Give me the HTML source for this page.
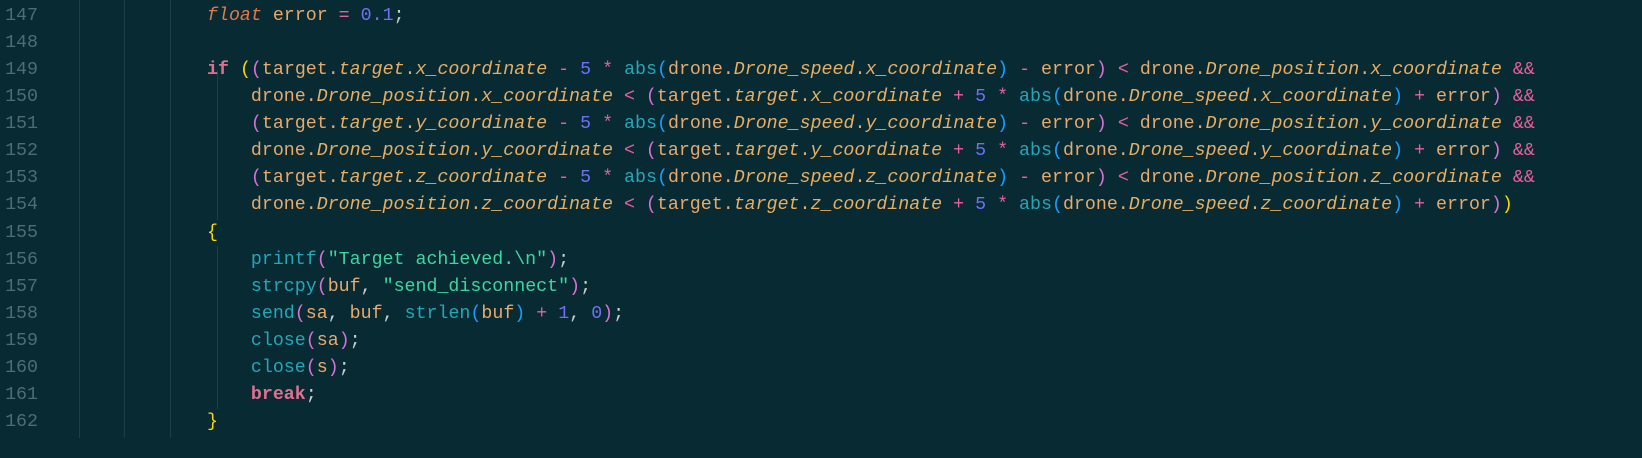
<!DOCTYPE html>
<html><head><meta charset="utf-8"><style>
body{margin:0;width:1642px;height:458px;background:#082a33;overflow:hidden;font-family:"Liberation Mono",monospace;font-size:18.3px;}
.g{position:absolute;top:0;width:1px;background:#1d4048;}
.ln{position:absolute;left:0;width:38px;text-align:right;color:#4d6d73;}
.c{position:absolute;left:207px;color:#e8a96c;}
.row{height:27.07px;line-height:27.07px;white-space:pre;}
i{font-style:italic;color:#e8ae62}
.k{color:#e0708f;font-weight:bold}
.t{color:#e07a4c;font-style:italic}
.o{color:#e8609a}
.n{color:#7070f0}
.f{color:#22a7b8}
.s{color:#3dd6a0}
.y{color:#ffd700}.p{color:#da70d6}.b{color:#179fff}
.w{color:#c8d0d0}
</style></head><body>
<div class="g" style="left:79px;height:438px"></div>
<div class="g" style="left:124px;height:438px"></div>
<div class="g" style="left:170px;height:438px"></div>
<div class="g" style="left:217px;top:70px;height:150px"></div>
<div class="g" style="left:217px;top:246px;height:163px"></div>
<div class="ln" style="top:3px">
<div class="row">147</div><div class="row">148</div><div class="row">149</div><div class="row">150</div><div class="row">151</div><div class="row">152</div><div class="row">153</div><div class="row">154</div><div class="row">155</div><div class="row">156</div><div class="row">157</div><div class="row">158</div><div class="row">159</div><div class="row">160</div><div class="row">161</div><div class="row">162</div>
</div>
<div class="c" style="top:3px">
<div class="row"><span class="t">float</span> error <span class="o">=</span> <span class="n">0.1</span><span class="w">;</span></div>
<div class="row"> </div>
<div class="row"><span class="k">if</span> <span class="y">(</span><span class="p">(</span>target.<i>target</i>.<i>x_coordinate</i> <span class="o">-</span> <span class="n">5</span> <span class="o">*</span> <span class="f">abs</span><span class="b">(</span>drone.<i>Drone_speed</i>.<i>x_coordinate</i><span class="b">)</span> <span class="o">-</span> error<span class="p">)</span> <span class="o">&lt;</span> drone.<i>Drone_position</i>.<i>x_coordinate</i> <span class="o">&amp;&amp;</span></div>
<div class="row">    drone.<i>Drone_position</i>.<i>x_coordinate</i> <span class="o">&lt;</span> <span class="p">(</span>target.<i>target</i>.<i>x_coordinate</i> <span class="o">+</span> <span class="n">5</span> <span class="o">*</span> <span class="f">abs</span><span class="b">(</span>drone.<i>Drone_speed</i>.<i>x_coordinate</i><span class="b">)</span> <span class="o">+</span> error<span class="p">)</span> <span class="o">&amp;&amp;</span></div>
<div class="row">    <span class="p">(</span>target.<i>target</i>.<i>y_coordinate</i> <span class="o">-</span> <span class="n">5</span> <span class="o">*</span> <span class="f">abs</span><span class="b">(</span>drone.<i>Drone_speed</i>.<i>y_coordinate</i><span class="b">)</span> <span class="o">-</span> error<span class="p">)</span> <span class="o">&lt;</span> drone.<i>Drone_position</i>.<i>y_coordinate</i> <span class="o">&amp;&amp;</span></div>
<div class="row">    drone.<i>Drone_position</i>.<i>y_coordinate</i> <span class="o">&lt;</span> <span class="p">(</span>target.<i>target</i>.<i>y_coordinate</i> <span class="o">+</span> <span class="n">5</span> <span class="o">*</span> <span class="f">abs</span><span class="b">(</span>drone.<i>Drone_speed</i>.<i>y_coordinate</i><span class="b">)</span> <span class="o">+</span> error<span class="p">)</span> <span class="o">&amp;&amp;</span></div>
<div class="row">    <span class="p">(</span>target.<i>target</i>.<i>z_coordinate</i> <span class="o">-</span> <span class="n">5</span> <span class="o">*</span> <span class="f">abs</span><span class="b">(</span>drone.<i>Drone_speed</i>.<i>z_coordinate</i><span class="b">)</span> <span class="o">-</span> error<span class="p">)</span> <span class="o">&lt;</span> drone.<i>Drone_position</i>.<i>z_coordinate</i> <span class="o">&amp;&amp;</span></div>
<div class="row">    drone.<i>Drone_position</i>.<i>z_coordinate</i> <span class="o">&lt;</span> <span class="p">(</span>target.<i>target</i>.<i>z_coordinate</i> <span class="o">+</span> <span class="n">5</span> <span class="o">*</span> <span class="f">abs</span><span class="b">(</span>drone.<i>Drone_speed</i>.<i>z_coordinate</i><span class="b">)</span> <span class="o">+</span> error<span class="p">)</span><span class="y">)</span></div>
<div class="row"><span class="y">{</span></div>
<div class="row">    <span class="f">printf</span><span class="p">(</span><span class="s">"Target achieved.\n"</span><span class="p">)</span><span class="w">;</span></div>
<div class="row">    <span class="f">strcpy</span><span class="p">(</span>buf<span class="w">,</span> <span class="s">"send_disconnect"</span><span class="p">)</span><span class="w">;</span></div>
<div class="row">    <span class="f">send</span><span class="p">(</span>sa<span class="w">,</span> buf<span class="w">,</span> <span class="f">strlen</span><span class="b">(</span>buf<span class="b">)</span> <span class="o">+</span> <span class="n">1</span><span class="w">,</span> <span class="n">0</span><span class="p">)</span><span class="w">;</span></div>
<div class="row">    <span class="f">close</span><span class="p">(</span>sa<span class="p">)</span><span class="w">;</span></div>
<div class="row">    <span class="f">close</span><span class="p">(</span>s<span class="p">)</span><span class="w">;</span></div>
<div class="row">    <span class="k">break</span><span class="w">;</span></div>
<div class="row"><span class="y">}</span></div>
</div>
</body></html>
